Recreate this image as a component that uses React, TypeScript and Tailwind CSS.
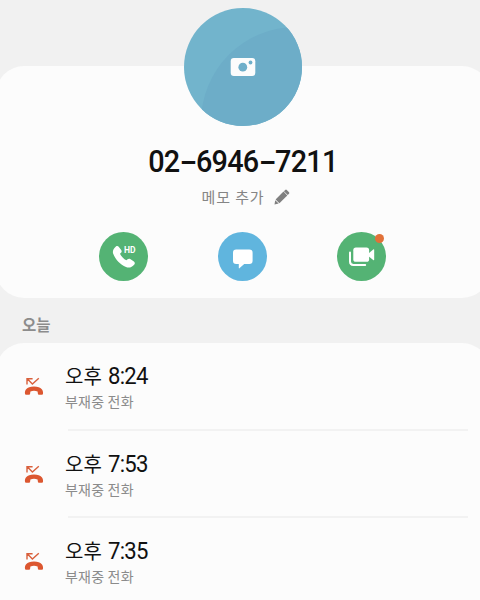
import { Fragment } from "react";

interface CallLog {
  time: string;
  status: string;
}

const calls: CallLog[] = [
  { time: "8:24", status: "부재중 전화" },
  { time: "7:53", status: "부재중 전화" },
  { time: "7:35", status: "부재중 전화" },
];

const phoneNumber = ["02", "6946", "7211"];

const CameraIcon = () => (
  <svg width="26" height="20" viewBox="0 0 26 20" className="relative">
    <rect x="0.7" y="1" width="24.6" height="18" rx="3.2" fill="#fcfcfc" />
    <circle cx="12.8" cy="10.2" r="4.4" fill="#6fafca" />
    <circle cx="20.5" cy="5.5" r="1.9" fill="#6fafca" />
  </svg>
);

const PencilIcon = () => (
  <svg width="16" height="16" viewBox="0 0 16 16" fill="#808080">
    <path d="M11.2 1 Q12 0.2 12.8 1 L15 3.2 Q15.8 4 15 4.7 L13.7 6 L9.9 2.2 Z" />
    <path d="M9.5 2.6 L13.3 6.4 L5.4 14.2 L1.6 10.4 Z" />
    <path d="M1.2 11.2 L4.7 14.6 L0.5 15.4 Z" />
  </svg>
);

const PhoneIcon = () => (
  <svg width="24" height="24" viewBox="0 0 24 24">
    <path
      d="M3.9 1.5 C4.9 0.7 6.1 0.9 6.9 1.9 L9.2 5.1 C9.9 6.1 9.8 7 9 7.7 L8 8.8 C9 11.2 11.8 14.1 14.4 15.3 L15.6 14.2 C16.4 13.5 17.4 13.5 18.2 14 L21.9 16.6 C22.9 17.3 23.1 18.4 22.3 19.4 C20.2 22 17.2 23.3 14 22 C8.2 19.5 3.4 14.6 1.2 8.8 C0.2 6 1.6 3.4 3.9 1.5 Z"
      fill="#fff"
    />
  </svg>
);

const MessageIcon = () => (
  <svg width="22" height="22" viewBox="0 0 22 22">
    <path
      d="M4.2 1.5 H17.3 Q20.6 1.5 20.6 4.8 V12.7 Q20.6 16 17.3 16 H12.2 L7.4 20.3 Q6.8 20.7 6.8 19.8 V16 H4.2 Q1 16 1 12.7 V4.8 Q1 1.5 4.2 1.5 Z"
      fill="#fff"
    />
  </svg>
);

const VideoIcon = () => (
  <svg width="28" height="22" viewBox="0 0 28 22">
    <rect x="5.3" y="1.6" width="15.8" height="14.2" rx="2.6" fill="#fff" />
    <path d="M20.5 7.6 L25.2 3.5 Q26.2 2.8 26.2 4 V13.6 Q26.2 14.8 25.2 14 L20.5 10.2 Z" fill="#fff" />
    <path d="M2 6.6 V15.6 Q2 19 5.4 19 H17.2" fill="none" stroke="#fff" strokeWidth="2" strokeLinecap="round" />
  </svg>
);

const MissedCallIcon = () => (
  <svg width="20" height="20" viewBox="0 0 20 20">
    <path
      d="M3 8.4 V2.7 H8.6 M3.5 3.1 L8.4 8 L14.8 2.3"
      fill="none"
      stroke="#d9603c"
      strokeWidth="1.4"
    />
    <path
      d="M1 17.8 C0.6 14.6 2.2 10.5 10 10.5 C17.8 10.5 19.4 14.6 19 17.8 Q18.9 18.7 18 18.7 H14.9 Q14 18.7 13.9 17.8 L13.6 15.4 Q10 14.3 6.4 15.4 L6.1 17.8 Q6 18.7 5.1 18.7 H2 Q1.1 18.7 1 17.8 Z"
      fill="#dc5730"
    />
  </svg>
);

export default function App() {
  return (
    <div className="h-[600px] w-[480px] overflow-hidden bg-[#f1f1f1] font-['Noto_Sans_CJK_KR',sans-serif]">
      {/* Contact card */}
      <div className="-ml-1 -mr-[10px] mt-[66px] flex h-[232px] flex-col items-center rounded-[28px] bg-[#fcfcfc]">
        <div className="relative -mt-[58px] flex size-[118px] shrink-0 items-center justify-center overflow-hidden rounded-full bg-[#72b4cc]">
          <div className="absolute left-[17px] top-[19px] size-[190px] rounded-full bg-[#6dadc8]" />
          <CameraIcon />
        </div>

        <h1 className="mt-[19px] flex h-[34px] scale-x-[0.93] items-center whitespace-pre font-['Roboto',sans-serif] text-[31px] font-medium leading-[34px] tracking-[-0.8px] text-[#111]">
          {phoneNumber.map((part, i) => (
            <Fragment key={part}>
              {i > 0 && <span className="mx-[4px] inline-block scale-x-[1.8]">-</span>}
              <span>{part}</span>
            </Fragment>
          ))}
        </h1>

        <div className="mt-[8px] flex h-5 items-center gap-[9px] pl-[5px]">
          <span className="text-[15px] leading-5 tracking-[0.9px] text-[#858585]">메모 추가</span>
          <PencilIcon />
        </div>

        <div className="mt-[25px] flex gap-[70px] pr-px">
          <button className="relative flex size-[49px] items-center justify-center rounded-full bg-[#54b374]">
            <PhoneIcon />
            <span className="absolute left-[25px] top-[13px] font-['Roboto',sans-serif] text-[8.5px] font-bold leading-[10px] text-white">
              HD
            </span>
          </button>
          <button className="flex size-[49px] items-center justify-center rounded-full bg-[#60b5de] pt-1">
            <MessageIcon />
          </button>
          <button className="relative flex size-[49px] items-center justify-center rounded-full bg-[#54b374]">
            <VideoIcon />
            <span className="absolute right-[2px] top-[2px] size-[9px] rounded-full bg-[#e17138]" />
          </button>
        </div>
      </div>

      <h2 className="flex h-[45px] items-center pl-[22px] pt-[9px] text-[15.5px] font-bold text-[#8c8c8c]">오늘</h2>

      {/* Call history */}
      <div className="-ml-1 -mr-[10px] h-[290px] rounded-t-[28px] bg-[#fcfcfc] pl-1 pr-[22px]">
        {calls.map((call, i) => (
          <div key={call.time} className="flex h-[87.5px]">
            <div className="w-[68px] pl-6 pt-[33px]">
              <MissedCallIcon />
            </div>
            <div
              className={
                i < calls.length - 1
                  ? "flex-1 border-b-2 border-[#f2f2f2] pt-[17px]"
                  : "flex-1 pt-[17px]"
              }
            >
              <div className="-ml-[3px] flex h-8 items-center gap-[6px] leading-8 text-[#111]">
                <span className="text-[20px]">오후</span>
                <span className="origin-left scale-x-[0.94] font-['Roboto',sans-serif] text-[23.5px] tracking-[-0.8px]">
                  {call.time}
                </span>
              </div>
              <div className="-ml-[3px] text-[14px] leading-[19px] tracking-[0.2px] text-[#8b8b8b]">{call.status}</div>
            </div>
          </div>
        ))}
      </div>
    </div>
  );
}
